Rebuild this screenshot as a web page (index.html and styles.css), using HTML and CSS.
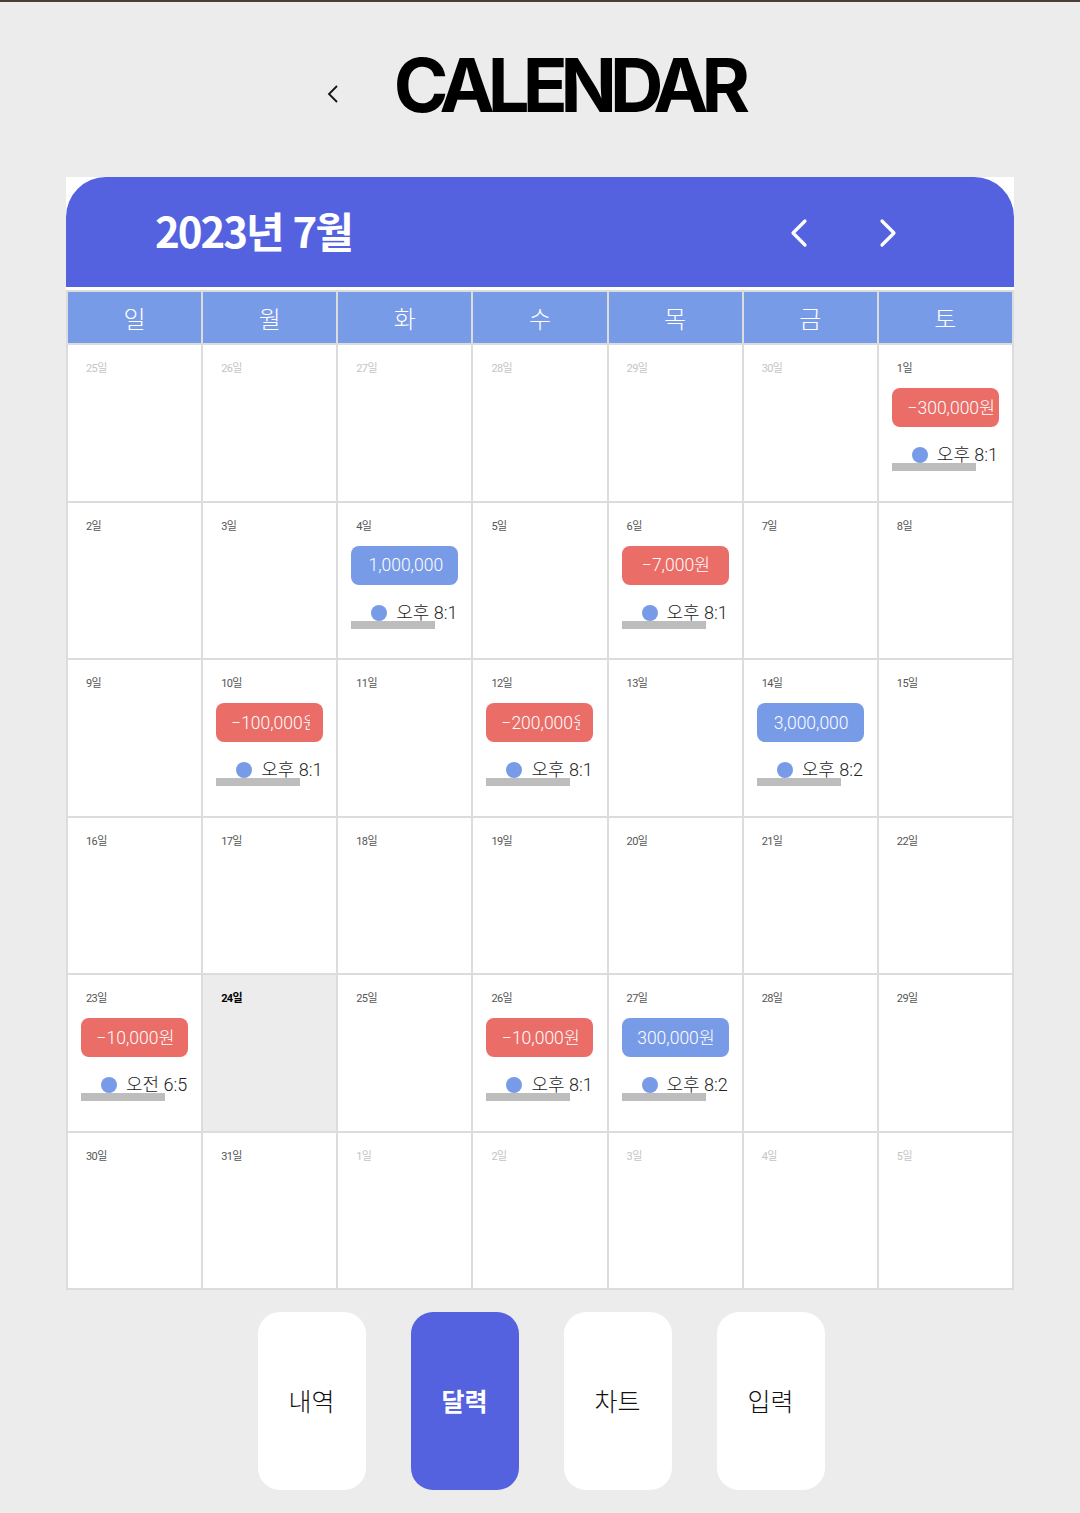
FILE: index.html
```html
<!DOCTYPE html>
<html lang="ko">
<head>
<meta charset="utf-8">
<title>Calendar</title>
<link rel="stylesheet" href="styles.css">
</head>
<body>
<header class="page-head">
  <svg class="back" width="12" height="20" viewBox="0 0 12 20"><polyline points="10,2 2,10 10,18" fill="none" stroke="#111" stroke-width="1.8"/></svg>
  <h1 class="title">CALENDAR</h1>
</header>

<main class="card">
  <div class="card-head">
    <div class="month">2023년 7월</div>
    <div class="nav">
      <svg width="20" height="30" viewBox="0 0 20 30"><polyline points="16,3 4,15 16,27" fill="none" stroke="#fff" stroke-width="3.2" stroke-linecap="round" stroke-linejoin="round"/></svg>
      <svg width="20" height="30" viewBox="0 0 20 30"><polyline points="4,3 16,15 4,27" fill="none" stroke="#fff" stroke-width="3.2" stroke-linecap="round" stroke-linejoin="round"/></svg>
    </div>
  </div>

  <div class="grid">
    <div class="wd">일</div><div class="wd">월</div><div class="wd">화</div><div class="wd">수</div><div class="wd">목</div><div class="wd">금</div><div class="wd">토</div>

    <div class="cell"><div class="date other">25일</div></div>
    <div class="cell"><div class="date other">26일</div></div>
    <div class="cell"><div class="date other">27일</div></div>
    <div class="cell"><div class="date other">28일</div></div>
    <div class="cell"><div class="date other">29일</div></div>
    <div class="cell"><div class="date other">30일</div></div>
    <div class="cell"><div class="date">1일</div>
      <div class="chip out wide"><span>−300,000원</span></div>
      <div class="time"><i class="dot"></i><span>오후 8:13</span></div><div class="bar"></div></div>

    <div class="cell"><div class="date">2일</div></div>
    <div class="cell"><div class="date">3일</div></div>
    <div class="cell"><div class="date">4일</div>
      <div class="chip in"><span>1,000,000</span></div>
      <div class="time"><i class="dot"></i><span>오후 8:1</span></div><div class="bar"></div></div>
    <div class="cell"><div class="date">5일</div></div>
    <div class="cell"><div class="date">6일</div>
      <div class="chip out"><span>−7,000원</span></div>
      <div class="time"><i class="dot"></i><span>오후 8:1</span></div><div class="bar"></div></div>
    <div class="cell"><div class="date">7일</div></div>
    <div class="cell"><div class="date">8일</div></div>

    <div class="cell"><div class="date">9일</div></div>
    <div class="cell"><div class="date">10일</div>
      <div class="chip out"><span>−100,000원</span></div>
      <div class="time"><i class="dot"></i><span>오후 8:1</span></div><div class="bar"></div></div>
    <div class="cell"><div class="date">11일</div></div>
    <div class="cell"><div class="date">12일</div>
      <div class="chip out"><span>−200,000원</span></div>
      <div class="time"><i class="dot"></i><span>오후 8:1</span></div><div class="bar"></div></div>
    <div class="cell"><div class="date">13일</div></div>
    <div class="cell"><div class="date">14일</div>
      <div class="chip in"><span>3,000,000</span></div>
      <div class="time"><i class="dot"></i><span>오후 8:2</span></div><div class="bar"></div></div>
    <div class="cell"><div class="date">15일</div></div>

    <div class="cell"><div class="date">16일</div></div>
    <div class="cell"><div class="date">17일</div></div>
    <div class="cell"><div class="date">18일</div></div>
    <div class="cell"><div class="date">19일</div></div>
    <div class="cell"><div class="date">20일</div></div>
    <div class="cell"><div class="date">21일</div></div>
    <div class="cell"><div class="date">22일</div></div>

    <div class="cell"><div class="date">23일</div>
      <div class="chip out"><span>−10,000원</span></div>
      <div class="time"><i class="dot"></i><span>오전 6:5</span></div><div class="bar"></div></div>
    <div class="cell today"><div class="date">24일</div></div>
    <div class="cell"><div class="date">25일</div></div>
    <div class="cell"><div class="date">26일</div>
      <div class="chip out"><span>−10,000원</span></div>
      <div class="time"><i class="dot"></i><span>오후 8:1</span></div><div class="bar"></div></div>
    <div class="cell"><div class="date">27일</div>
      <div class="chip in"><span>300,000원</span></div>
      <div class="time"><i class="dot"></i><span>오후 8:2</span></div><div class="bar"></div></div>
    <div class="cell"><div class="date">28일</div></div>
    <div class="cell"><div class="date">29일</div></div>

    <div class="cell"><div class="date">30일</div></div>
    <div class="cell"><div class="date">31일</div></div>
    <div class="cell"><div class="date other">1일</div></div>
    <div class="cell"><div class="date other">2일</div></div>
    <div class="cell"><div class="date other">3일</div></div>
    <div class="cell"><div class="date other">4일</div></div>
    <div class="cell"><div class="date other">5일</div></div>
  </div>
</main>

<nav class="tabs">
  <a class="tab">내역</a>
  <a class="tab active">달력</a>
  <a class="tab">차트</a>
  <a class="tab">입력</a>
</nav>
</body>
</html>
```

FILE: styles.css
```css
* { box-sizing: border-box; }
html, body { margin: 0; padding: 0; }
body {
  background: #ececec;
  border-top: 2px solid #4d3d37;
  font-family: "Noto Sans CJK KR", "Noto Sans", sans-serif;
  color: #111;
  height: 1513px;
  overflow: hidden;
}

.page-head {
  height: 175px;
  display: flex;
  align-items: center;
  justify-content: center;
  gap: 55px;
  padding-right: 10px;
  padding-bottom: 10px;
}
.back { display: block; margin-top: 18px; }
.title {
  margin: 0;
  font-family: Inter, "Liberation Sans", sans-serif;
  font-weight: 700;
  font-size: 74px;
  letter-spacing: -7px;
  line-height: 1;
  color: #000;
}

.card {
  width: 948px;
  margin: 0 auto;
  background: #fff;
}
.card-head {
  height: 110px;
  background: #5462e0;
  border-radius: 40px 40px 0 0;
  display: flex;
  align-items: center;
  justify-content: space-between;
  padding: 0 116px 0 89px;
}
.month {
  color: #fff;
  font-weight: 700;
  font-size: 42px;
  letter-spacing: -2px;
  line-height: 1;
  margin-top: -4px;
}
.nav { display: flex; gap: 69px; align-items: center; margin-top: 2px; }
.nav svg { display: block; }

.grid {
  display: grid;
  grid-template-columns: repeat(7, 1fr);
  grid-template-rows: 51px repeat(6, 155.5px);
  gap: 2px;
  padding: 2px;
  margin-top: 3px;
  background: #dcdcdc;
}
.wd {
  background: #789be8;
  color: #fff;
  font-size: 24px;
  font-weight: 300;
  display: flex;
  align-items: center;
  justify-content: center;
}
.cell {
  background: #fff;
  padding: 17px 0 0 13px;
}
.cell.today { background: #ececec; }
.date {
  font-family: Roboto, "Noto Sans CJK KR", sans-serif;
  font-size: 11px;
  line-height: 14px;
  color: #555;
  letter-spacing: -0.6px;
  margin-left: 5px;
  height: 14px;
}
.date.other { color: #c4c4c4; }
.today .date { color: #000; font-weight: 700; }

.chip {
  width: 107px;
  height: 39px;
  margin-top: 12px;
  border-radius: 8px;
  padding: 0 13px 0 15px;
  display: flex;
  align-items: center;
  color: #fff;
  font-family: Roboto, "Noto Sans CJK KR", sans-serif;
  font-size: 17.5px;
  font-weight: 300;
}
.chip span {
  display: block;
  width: 100%;
  overflow: hidden;
  white-space: nowrap;
  text-align: center;
  line-height: 22px;
}
.chip.wide { padding-right: 3px; }
.chip.out { background: #ea6d67; }
.chip.in { background: #789be8; }

.time {
  width: 107px;
  height: 20px;
  margin-top: 18px;
  padding-left: 20px;
  display: flex;
  align-items: center;
  gap: 9px;
  overflow: hidden;
  white-space: nowrap;
  font-family: Roboto, "Noto Sans CJK KR", sans-serif;
  font-size: 18px;
  font-weight: 300;
  color: #222;
  line-height: 20px;
}
.dot {
  flex: none;
  width: 16px;
  height: 16px;
  border-radius: 50%;
  background: #789be8;
}
.bar {
  width: 84px;
  height: 8px;
  background: #bdbdbd;
  margin-top: -2px;
}

.tabs {
  display: flex;
  justify-content: center;
  gap: 45px;
  margin-top: 22px;
  padding-left: 2px;
}
.tab {
  width: 108px;
  height: 178px;
  border-radius: 22px;
  background: #fff;
  color: #111;
  display: flex;
  align-items: center;
  justify-content: center;
  font-size: 25px;
  font-weight: 300;
  padding-bottom: 2px;
}
.tab.active {
  background: #5462e0;
  color: #fff;
  font-weight: 700;
}
```
